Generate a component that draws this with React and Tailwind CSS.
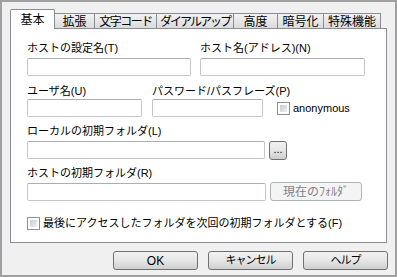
import React from "react";

const tabs = [
    { label: "基本", w: "w-[45px]", active: true },
    { label: "拡張", w: "w-[40px]" },
    { label: "文字コード", w: "w-[62px]", tight: "tracking-[-1.5px]" },
    { label: "ダイアルアップ", w: "w-[77px]", tight: "tracking-[-2px]" },
    { label: "高度", w: "w-[44px]" },
    { label: "暗号化", w: "w-[46px]" },
    { label: "特殊機能", w: "w-[57px]" },
];

const TextBox = ({ className = "" }) => (
    <div className={`h-[18px] rounded-[2px] border border-[#c3c6cb] border-t-[#abadb3] bg-white ${className}`} />
);

const CheckBox = () => (
    <div className="h-[13px] w-[13px] shrink-0 border border-[#8e8f8f] bg-white p-[2px]">
        <div className="h-full w-full bg-linear-to-br from-[#c6c9cc] to-[#f2f2f2]" />
    </div>
);

const Button = ({ children, className = "", disabled }) => (
    <div
        className={`flex h-[19px] items-center justify-center rounded-[3px] border text-[11px] leading-none ${
            disabled
                ? "border-[#adb2b5] bg-[#f4f4f4] text-[#838383]"
                : "border-[#707070] bg-linear-to-b from-[#f2f2f2] via-[#e6e6e6] to-[#cfcfcf] text-black"
        } ${className}`}
    >
        {children}
    </div>
);

const Label = ({ children, className = "" }) => (
    <div className={`h-[14px] whitespace-nowrap text-[11px] leading-[14px] ${className}`}>{children}</div>
);

export default function App() {
    return (
        <div className="flex h-[277px] w-[397px] flex-col border-2 border-[#a0a0a0] bg-[#f0f0f0] pl-[8px] pt-[7px] font-['Liberation_Sans','Noto_Sans_CJK_JP',sans-serif] text-black">
            {/* tab strip */}
            <div className="flex h-[20px] items-end">
                {tabs.map((t) =>
                    t.active ? (
                        <div
                            key={t.label}
                            className={`relative z-10 flex h-[20px] ${t.w} justify-center rounded-t-[2px] border border-b-0 border-[#898c95] bg-white pt-[3px] text-[12px] leading-[14px]`}
                        >
                            {t.label}
                        </div>
                    ) : (
                        <div
                            key={t.label}
                            className={`flex h-[16px] ${t.w} justify-center border-t border-r border-[#898c95] bg-linear-to-b from-[#f3f3f3] to-[#d9d9d9] pt-[1px] text-[12px] leading-[14px] whitespace-nowrap ${t.tight || ""}`}
                        >
                            {t.label}
                        </div>
                    )
                )}
            </div>

            {/* panel */}
            <div className="relative -mt-px h-[215px] w-[377px] border border-[#898c95] bg-white pl-[16px] pt-[12px]">
                <div className="flex gap-[9px]">
                    <div className="w-[164px]">
                        <Label>ホストの設定名(T)</Label>
                        <TextBox className="mt-[3px]" />
                    </div>
                    <div className="w-[165px]">
                        <Label>ホスト名(アドレス)(N)</Label>
                        <TextBox className="mt-[3px]" />
                    </div>
                </div>

                <div className="mt-[8px] flex">
                    <div className="w-[115px]">
                        <Label>ユーザ名(U)</Label>
                        <TextBox className="mt-[1px]" />
                    </div>
                    <div className="ml-[10px] w-[111px]">
                        <Label>パスワード/パスフレーズ(P)</Label>
                        <TextBox className="mt-[1px]" />
                    </div>
                    <div className="mb-[2px] ml-[14px] flex items-center self-end">
                        <CheckBox />
                        <span className="ml-[3px] text-[11px] leading-[13px]">anonymous</span>
                    </div>
                </div>

                <div className="mt-[7px]">
                    <Label>ローカルの初期フォルダ(L)</Label>
                    <div className="mt-[3px] flex items-start">
                        <TextBox className="w-[238px]" />
                        <Button className="ml-[4px] w-[18px] items-end pb-[4px] text-[9px]">...</Button>
                    </div>
                </div>

                <div className="mt-[6px]">
                    <Label>ホストの初期フォルダ(R)</Label>
                    <div className="mt-[2px] flex items-start">
                        <TextBox className="mt-[1px] w-[239px]" />
                        <Button disabled className="ml-[4px] w-[92px] text-[12px]">
                            現在のﾌｫﾙﾀﾞ
                        </Button>
                    </div>
                </div>

                <div className="mt-[16px] flex h-[13px] items-center">
                    <CheckBox />
                    <span className="ml-[3px] whitespace-nowrap text-[11px] leading-[13px]">
                        最後にアクセスしたフォルダを次回の初期フォルダとする(F)
                    </span>
                </div>
            </div>

            {/* buttons */}
            <div className="mt-[8px] flex justify-end gap-[10px] pr-[7px]">
                <Button className="w-[85px] text-[12px]">OK</Button>
                <Button className="w-[85px] tracking-[-1px]">キャンセル</Button>
                <Button className="w-[85px] tracking-[-1px]">ヘルプ</Button>
            </div>
        </div>
    );
}
